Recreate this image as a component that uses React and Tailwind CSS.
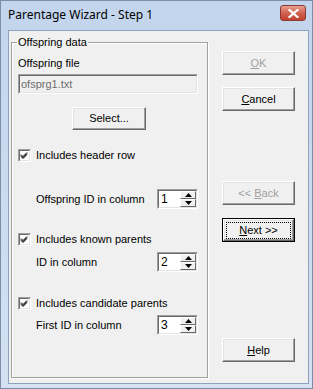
import React from 'react';

const font = { fontFamily: '"Liberation Sans", Arial, sans-serif' };

const Btn = ({ children, disabled, isDefault, className = '' }) => (
  <div
    className={`h-[24px] w-[73px] ${isDefault ? 'border border-black' : ''} ${className}`}
  >
    <div className="h-full w-full border border-t-white border-l-white border-r-[#696969] border-b-[#696969] bg-[#f0f0f0] shadow-[inset_-1px_-1px_0_#a0a0a0,inset_1px_1px_0_#e3e3e3] flex items-center justify-center">
      <div
        className={`px-[6px] leading-[13px] text-[11px] ${disabled ? 'text-[#a0a0a0]' : 'text-black'} ${isDefault ? 'outline outline-1 outline-dotted outline-black outline-offset-[1px] w-[61px] text-center' : ''}`}
      >
        {children}
      </div>
    </div>
  </div>
);

const Check = ({ label, className = '' }) => (
  <div className={`flex h-[13px] items-center ${className}`}>
    <div className="h-[13px] w-[13px] border border-t-[#a0a0a0] border-l-[#a0a0a0] border-r-white border-b-white">
      <div className="h-full w-full border border-t-[#696969] border-l-[#696969] border-r-[#e3e3e3] border-b-[#e3e3e3] bg-white">
        <svg width="9" height="9" viewBox="0 0 9 9" className="block">
          <path d="M1 3.5 L3 5.5 L7 1.5 M1 4.5 L3 6.5 L7 2.5 M1 5.5 L3 7.5 L7 3.5" stroke="black" strokeWidth="1" fill="none" />
        </svg>
      </div>
    </div>
    <span className="ml-[5px] text-[11px] leading-[13px] text-black">{label}</span>
  </div>
);

const Arrow = ({ up }) => (
  <div className="flex-1 border border-t-white border-l-white border-r-[#696969] border-b-[#696969] bg-[#f0f0f0] flex items-center justify-center">
    <svg width="7" height="4" viewBox="0 0 7 4" className="block">
      <path d={up ? 'M3.5 0 L7 4 L0 4 Z' : 'M0 0 L7 0 L3.5 4 Z'} fill="black" />
    </svg>
  </div>
);

const Spin = ({ value, label, className = '' }) => (
  <div className={`flex items-center justify-between pl-[18px] ${className}`}>
    <span className="text-[11px] leading-[13px] text-black">{label}</span>
    <div className="h-[20px] w-[41px] border border-t-[#a0a0a0] border-l-[#a0a0a0] border-r-white border-b-white">
      <div className="flex h-full w-full border border-t-[#696969] border-l-[#696969] border-r-[#e3e3e3] border-b-[#e3e3e3] bg-white">
        <div className="flex-1 pl-[2px] pt-[2px] text-[12px] leading-[13px] text-black">{value}</div>
        <div className="flex w-[16px] flex-col">
          <Arrow up />
          <Arrow />
        </div>
      </div>
    </div>
  </div>
);

export default function App() {
  return (
    <div
      style={font}
      className="flex h-[389px] w-[313px] flex-col bg-gradient-to-b from-[#c2d5ed] to-[#d3e1f2] border border-[#7a8ea8]"
    >
      {/* title bar */}
      <div className="flex h-[29px] items-start justify-between pl-[7px] pr-[6px]">
        <span className="mt-[6px] text-[12px] leading-[15px] text-black" style={{ fontFamily: '"Noto Sans", "Liberation Sans", sans-serif' }}>
          Parentage Wizard - Step 1
        </span>
        <div className="mt-[4px] flex h-[16px] w-[26px] items-center justify-center rounded-[3px] border border-[#8a3a33] bg-gradient-to-b from-[#e8a193] via-[#d0614f] to-[#c0412f]">
          <svg width="11" height="9" viewBox="0 0 11 9">
            <path d="M1.5 1 L9.5 8 M9.5 1 L1.5 8" stroke="white" strokeWidth="2.2" strokeLinecap="square" />
          </svg>
        </div>
      </div>

      {/* client */}
      <div className="ml-[7px] mr-[3px] flex flex-1 border border-[#8da2bd] bg-[#f0f0f0] mb-[4px]">
        <div className="ml-[2px] mt-[11px] h-[336px] w-[197px] border border-[#a0a0a0] shadow-[inset_1px_1px_0_white,1px_1px_0_white]">
          <div className="-mt-[7px] ml-[5px] w-fit bg-[#f0f0f0] px-[1px] text-[11px] leading-[12px] text-black">
            Offspring data
          </div>
          <div className="pl-[6px] pr-[9px]">
            <div className="mt-[9px] text-[11px] leading-[13px] text-black">Offspring file</div>
            <div className="mt-[4px] h-[20px] border border-t-[#a0a0a0] border-l-[#a0a0a0] border-r-white border-b-white">
              <div className="h-full border border-t-[#696969] border-l-[#696969] border-r-[#e3e3e3] border-b-[#e3e3e3] bg-[#f0f0f0] pl-[1px] pt-[2px] text-[11px] leading-[13px] text-[#6d6d6d]">
                ofsprg1.txt
              </div>
            </div>
            <div className="mt-[13px] flex pl-[54px]">
              <Btn className="!h-[23px] !w-[74px]">Select...</Btn>
            </div>
            <Check label="Includes header row" className="mt-[19px]" />
            <Spin label="Offspring ID in column" value="1" className="mt-[27px]" />
            <Check label="Includes known parents" className="mt-[24px]" />
            <Spin label="ID in column" value="2" className="mt-[6px]" />
            <Check label="Includes candidate parents" className="mt-[25px]" />
            <Spin label="First ID in column" value="3" className="mt-[5px]" />
          </div>
        </div>

        <div className="ml-[14px] flex flex-col">
          <Btn disabled className="mt-[20px]"><span className="underline">O</span>K</Btn>
          <Btn className="mt-[12px]"><span className="underline">C</span>ancel</Btn>
          <Btn disabled className="mt-[70px]">&lt;&lt; <span className="underline">B</span>ack</Btn>
          <Btn isDefault className="mt-[13px]"><span className="underline">N</span>ext &gt;&gt;</Btn>
          <Btn className="mt-[96px]"><span className="underline">H</span>elp</Btn>
        </div>
      </div>
    </div>
  );
}
